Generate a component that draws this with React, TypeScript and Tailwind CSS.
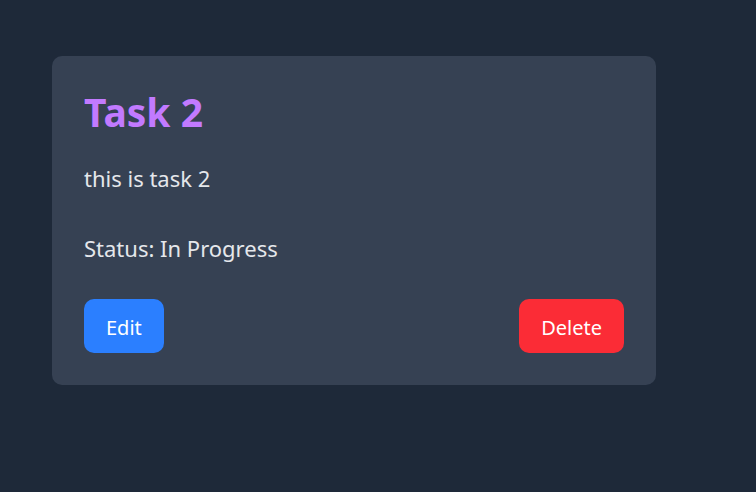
export default function App() {
  return (
    <div className="min-h-screen bg-[#1e2939] pt-[56px] pl-[52px] font-['Noto_Sans',sans-serif]">
      <div className="w-[604px] rounded-[10px] bg-[#364153] p-8">
        <h2 className="text-[39px] leading-[48px] font-bold text-[#c27aff]">Task 2</h2>
        <p className="mt-[26px] text-[22px] leading-[32px] text-[#e5e7eb]">this is task 2</p>
        <p className="mt-[38px] text-[22px] leading-[32px] text-[#e5e7eb]">Status: In Progress</p>
        <div className="mt-[35px] flex justify-between">
          <button className="h-[54px] rounded-[10px] bg-[#2b7fff] px-[22px] pt-[3px] text-[20px] text-white">Edit</button>
          <button className="h-[54px] rounded-[10px] bg-[#fb2c36] px-[22px] pt-[3px] text-[20px] text-white">Delete</button>
        </div>
      </div>
    </div>
  );
}
